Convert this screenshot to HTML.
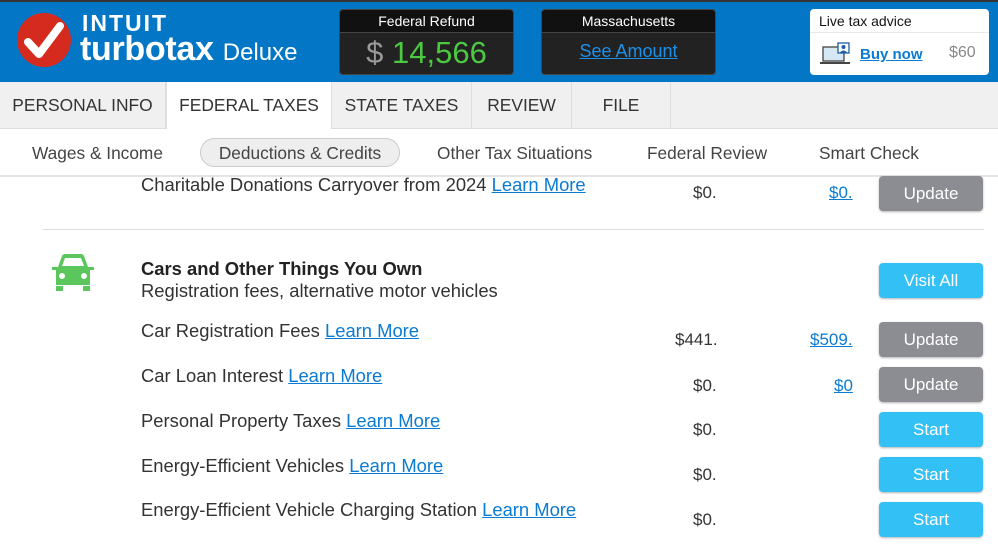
<!DOCTYPE html>
<html><head><style>
*{margin:0;padding:0;box-sizing:border-box}
body{width:998px;height:552px;overflow:hidden;background:#fff;font-family:"Liberation Sans",Arial,sans-serif;position:relative;color:#333}
.a{position:absolute;white-space:nowrap}
.hdr{left:0;top:0;width:998px;height:82px;background:#0377c6;border-top:2px solid #333}
.box{background:#222;border:1px solid #444;border-radius:4px;color:#fff}
.tabs{left:0;top:82px;width:998px;height:47px;background:#f0f0f0;border-bottom:1px solid #ddd}
.tab{position:absolute;top:0;height:47px;font-size:17.4px;line-height:47px;text-align:center;color:#333;border-right:1px solid #ddd}
.sub{left:0;top:129px;width:998px;height:48px;background:#fff;border-bottom:2px solid #e4e4e4}
.sn{position:absolute;top:10px;font-size:17.3px;line-height:28px;color:#444}
.t{font-size:18.4px;color:#333}
a{color:#0a7bd3;text-decoration:underline}
.btn{position:absolute;left:879px;width:104px;height:35px;border-radius:4px;color:#fff;font-size:17px;line-height:35px;text-align:center;box-shadow:0 1px 2px rgba(0,0,0,.3)}
.g{background:#8c8d92}.b{background:#33c0f5}
.amt{font-size:17px;color:#333}
a.amt{color:#0a7bd3}
</style></head><body>
<div class="a hdr"></div>
<svg class="a" style="left:16px;top:12px" width="56" height="56" viewBox="0 0 56 56"><circle cx="28" cy="28" r="27" fill="#d52b1e"/><path d="M12 30 L23 42 L44 14" stroke="#fff" stroke-width="8" fill="none" stroke-linecap="round" stroke-linejoin="round"/></svg>
<div class="a" style="left:82px;top:10px;color:#fff;font-weight:bold;font-size:23px;letter-spacing:2px">INTUIT</div>
<div class="a" style="left:80px;top:30px;color:#fff;font-weight:bold;font-size:34px;letter-spacing:-0.3px">turbotax <span style="font-weight:normal;font-size:24px;letter-spacing:0">Deluxe</span></div>
<div class="a box" style="left:339px;top:9px;width:175px;height:66px">
<div style="height:23px;background:#111;border-bottom:1px solid #444;font-size:14px;line-height:23px;text-align:center;border-radius:4px 4px 0 0">Federal Refund</div>
<div style="text-align:center;font-size:31px;line-height:40px;color:#4cc842"><span style="color:#999">$</span> 14,566</div></div>
<div class="a box" style="left:541px;top:9px;width:175px;height:66px">
<div style="height:23px;background:#111;border-bottom:1px solid #444;font-size:14px;line-height:23px;text-align:center;border-radius:4px 4px 0 0">Massachusetts</div>
<div style="text-align:center;font-size:18px;line-height:36px"><a style="color:#1e90e8">See Amount</a></div></div>
<div class="a" style="left:810px;top:9px;width:179px;height:66px;background:#fff;border-radius:4px">
<div style="height:24px;border-bottom:1px solid #e8e8e8;font-size:14px;line-height:24px;padding-left:9px;color:#111">Live tax advice</div>
<svg style="position:absolute;left:10px;top:33px" width="30" height="24" viewBox="0 0 30 24"><rect x="3" y="5" width="21" height="14" fill="#d7e8f5" stroke="#444" stroke-width="1.3"/><path d="M0 21h30" stroke="#444" stroke-width="2"/><rect x="18" y="1" width="11" height="10" fill="#fff" stroke="#1d5fa0" stroke-width="1.3"/><circle cx="23.5" cy="5" r="2" fill="#1d5fa0"/><path d="M19.5 11q4-5 8 0z" fill="#1d5fa0"/></svg>
<a class="a" style="left:50px;top:37px;font-size:15px;font-weight:bold;color:#0a7bd3">Buy now</a>
<div class="a" style="left:139px;top:35px;font-size:16px;color:#888">$60</div></div>
<div class="a tabs">
<div class="tab" style="left:0;width:166px">PERSONAL INFO</div>
<div class="tab" style="left:166px;width:166px;background:#fff;height:48px;border-left:1px solid #ddd">FEDERAL TAXES</div>
<div class="tab" style="left:332px;width:140px">STATE TAXES</div>
<div class="tab" style="left:472px;width:100px">REVIEW</div>
<div class="tab" style="left:572px;width:99px">FILE</div>
</div>
<div class="a sub">
<div class="sn" style="left:32px">Wages &amp; Income</div>
<div class="sn" style="left:200px;width:200px;height:29px;top:9px;border:1px solid #ccc;border-radius:15px;background:#eee;text-align:center">Deductions &amp; Credits</div>
<div class="sn" style="left:437px">Other Tax Situations</div>
<div class="sn" style="left:647px">Federal Review</div>
<div class="sn" style="left:819px">Smart Check</div>
</div>
<div class="a t" style="left:141px;top:174px">Charitable Donations Carryover from 2024 <a>Learn More</a></div>
<div class="a amt" style="left:693px;top:183px">$0.</div>
<a class="a amt" style="left:829px;top:183px">$0.</a>
<div class="btn g" style="top:176px">Update</div>
<div class="a" style="left:43px;top:229px;width:941px;height:1px;background:#ddd"></div>
<svg class="a" style="left:50px;top:253px" width="46" height="40" viewBox="0 0 46 40"><path d="M8 14 L12 3 Q13 1 15 1 H31 Q33 1 34 3 L38 14 H44 V17 H40 V32 H6 V17 H2 V14 Z" fill="#5bc65b"/><path d="M12 13 L15 5 H31 L34 13 Z" fill="#fff"/><circle cx="12" cy="23" r="3" fill="#fff"/><circle cx="34" cy="23" r="3" fill="#fff"/><rect x="6" y="33" width="7" height="5" fill="#5bc65b"/><rect x="33" y="33" width="7" height="5" fill="#5bc65b"/></svg>
<div class="a t" style="left:141px;top:258px;font-weight:bold;color:#222">Cars and Other Things You Own</div>
<div class="a t" style="left:141px;top:280px">Registration fees, alternative motor vehicles</div>
<div class="btn b" style="top:263px">Visit All</div>
<div class="a t" style="left:141px;top:320px">Car Registration Fees <a>Learn More</a></div>
<div class="a amt" style="left:675px;top:330px">$441.</div>
<a class="a amt" style="left:810px;top:330px">$509.</a>
<div class="btn g" style="top:322px">Update</div>
<div class="a t" style="left:141px;top:365px">Car Loan Interest <a>Learn More</a></div>
<div class="a amt" style="left:693px;top:376px">$0.</div>
<a class="a amt" style="left:834px;top:376px">$0</a>
<div class="btn g" style="top:367px">Update</div>
<div class="a t" style="left:141px;top:410px">Personal Property Taxes <a>Learn More</a></div>
<div class="a amt" style="left:693px;top:420px">$0.</div>
<div class="btn b" style="top:412px">Start</div>
<div class="a t" style="left:141px;top:455px">Energy-Efficient Vehicles <a>Learn More</a></div>
<div class="a amt" style="left:693px;top:465px">$0.</div>
<div class="btn b" style="top:457px">Start</div>
<div class="a t" style="left:141px;top:499px">Energy-Efficient Vehicle Charging Station <a>Learn More</a></div>
<div class="a amt" style="left:693px;top:510px">$0.</div>
<div class="btn b" style="top:502px">Start</div>
</body></html>
